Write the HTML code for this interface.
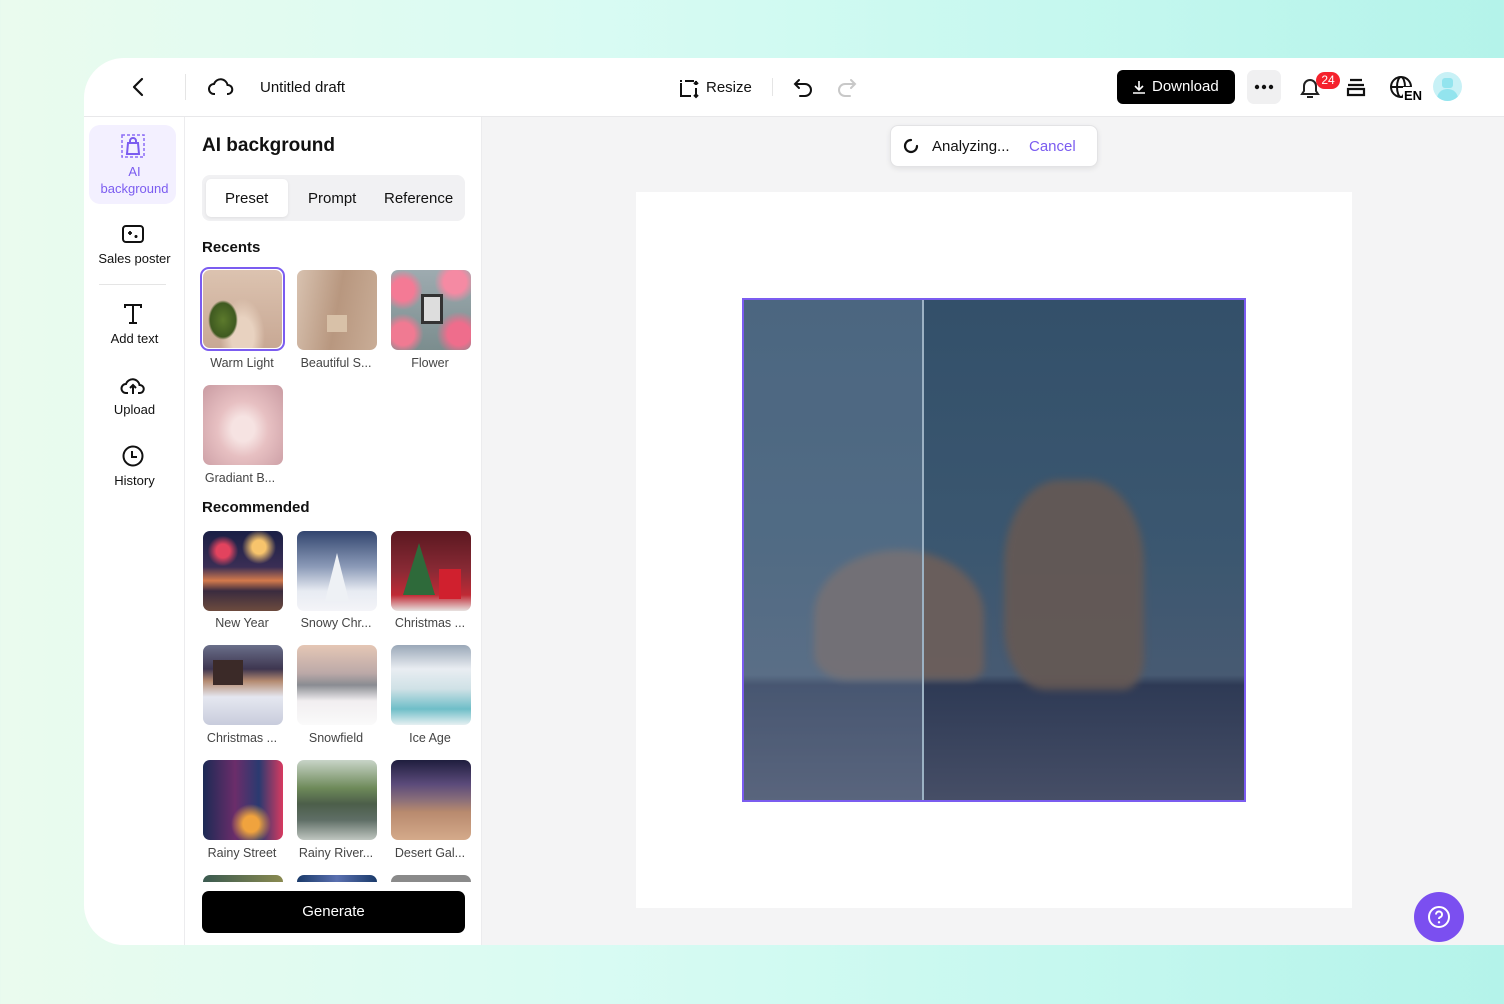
<!DOCTYPE html>
<html><head><meta charset="utf-8"><style>
*{box-sizing:border-box;margin:0;padding:0}
body{width:1504px;height:1004px;overflow:hidden;font-family:"Liberation Sans",sans-serif;color:#111;background:linear-gradient(90deg,#eafbee 0%,#d8fbf3 40%,#c6f8ef 70%,#b4f3ea 100%);position:relative}
.win{position:absolute;left:84px;top:58px;width:1460px;height:887px;background:#f4f4f5;border-radius:40px 0 0 40px;overflow:hidden}
.top{position:absolute;left:0;top:0;width:100%;height:59px;background:#fff;border-bottom:1px solid #e8e8ea}
.abs{position:absolute}
.side{position:absolute;left:0;top:59px;width:101px;height:828px;background:#fff;border-right:1px solid #ececee}
.panel{position:absolute;left:101px;top:59px;width:297px;height:828px;background:#fff;border-right:1px solid #ececee;overflow:hidden}
.si{position:absolute;left:0;width:101px;text-align:center;font-size:13px;color:#111}
.th{position:absolute;width:80px;height:80px;border-radius:7px;overflow:hidden}
.lb{position:absolute;width:94px;text-align:center;font-size:12.5px;color:#444}
</style></head><body>
<div class="win">
 <div class="top">
  <svg class="abs" style="left:46px;top:19px" width="16" height="20" viewBox="0 0 16 20"><path d="M12 2L4 10l8 8" fill="none" stroke="#111" stroke-width="2.2" stroke-linecap="round" stroke-linejoin="round"/></svg>
  <div class="abs" style="left:101px;top:16px;width:1px;height:26px;background:#e5e5e5"></div>
  <svg class="abs" style="left:124px;top:17px" width="26" height="24" viewBox="0 0 26 24"><path d="M7 19H6a5 5 0 0 1 0-10 7 7 0 0 1 13.5 1A4.5 4.5 0 0 1 20 19h-1" fill="none" stroke="#111" stroke-width="2"/></svg>
  <div class="abs" style="left:176px;top:21px;font-size:15px">Untitled draft</div>
  <svg class="abs" style="left:594px;top:19px" width="22" height="22" viewBox="0 0 22 22"><path d="M3 6v13h10M3 3v2M7 4h9M18 4v4M18 11v9M16 7l2-2 2 2M16 18l2 2 2-2" fill="none" stroke="#111" stroke-width="2"/></svg>
  <div class="abs" style="left:622px;top:21px;font-size:15px">Resize</div>
  <div class="abs" style="left:688px;top:20px;width:1px;height:18px;background:#e5e5e5"></div>
  <svg class="abs" style="left:709px;top:19px" width="22" height="22" viewBox="0 0 22 22"><path d="M6 3L2 7l4 4M2 7h10a6 6 0 0 1 0 12H7" fill="none" stroke="#111" stroke-width="2" stroke-linecap="round"/></svg>
  <svg class="abs" style="left:751px;top:19px" width="22" height="22" viewBox="0 0 22 22"><path d="M16 3l4 4-4 4M20 7H10a6 6 0 0 0 0 12h5" fill="none" stroke="#c8c8c8" stroke-width="2" stroke-linecap="round"/></svg>
  <div class="abs" style="left:1033px;top:12px;width:118px;height:34px;background:#000;border-radius:6px;color:#fff;font-size:15px;line-height:34px;padding-left:35px">Download</div>
  <svg class="abs" style="left:1047px;top:21px" width="16" height="16" viewBox="0 0 16 16"><path d="M8 2v9M4 7l4 4 4-4M2 14h12" fill="none" stroke="#fff" stroke-width="1.6"/></svg>
  <div class="abs" style="left:1163px;top:12px;width:34px;height:34px;background:#f0f0f1;border-radius:7px"></div>
  <svg class="abs" style="left:1170px;top:26px" width="20" height="6" viewBox="0 0 20 6"><circle cx="3" cy="3" r="2.2" fill="#111"/><circle cx="10" cy="3" r="2.2" fill="#111"/><circle cx="17" cy="3" r="2.2" fill="#111"/></svg>
  <svg class="abs" style="left:1213px;top:17px" width="26" height="26" viewBox="0 0 26 26"><path d="M5 19h16l-2-3v-5a6 6 0 0 0-12 0v5zM10 22h6" fill="none" stroke="#222" stroke-width="2"/></svg>
  <div class="abs" style="left:1232px;top:14px;width:24px;height:17px;background:#f5222d;border-radius:9px;color:#fff;font-size:12px;text-align:center;line-height:17px">24</div>
  <svg class="abs" style="left:1260px;top:18px" width="24" height="24" viewBox="0 0 24 24"><path d="M6 4h12M4 9h16M4 13h16v6H4z" fill="none" stroke="#111" stroke-width="2.2"/></svg>
  <svg class="abs" style="left:1305px;top:17px" width="34" height="26" viewBox="0 0 34 26"><circle cx="12" cy="12" r="10" fill="none" stroke="#111" stroke-width="2"/><ellipse cx="12" cy="12" rx="4" ry="10" fill="none" stroke="#111" stroke-width="2"/><path d="M2 12h20" stroke="#111" stroke-width="2"/><rect x="14" y="12" width="20" height="14" fill="#fff"/><text x="15" y="25" font-size="13" font-weight="bold" font-family="Liberation Sans">EN</text></svg>
  <div class="abs" style="left:1349px;top:14px;width:29px;height:29px;border-radius:50%;background:#c8f1f6;overflow:hidden"><div style="position:absolute;left:9px;top:6px;width:11px;height:10px;background:#93e4ee;border-radius:3px"></div><div style="position:absolute;left:4px;top:17px;width:21px;height:14px;background:#93e4ee;border-radius:10px 10px 0 0"></div></div>
 </div>
 <div class="side">
  <div class="abs" style="left:5px;top:8px;width:87px;height:79px;background:#f3f0ff;border-radius:11px"></div>
  <svg class="abs" style="left:37px;top:17px" width="24" height="24" viewBox="0 0 24 24"><rect x="1" y="1" width="22" height="22" fill="none" stroke="#8b6cf6" stroke-width="1.5" stroke-dasharray="3 2"/><path d="M6 20l1-11h10l1 11zM9 9V7a3 3 0 0 1 6 0v2" fill="none" stroke="#7b5cf0" stroke-width="2"/></svg>
  <div class="si" style="top:46px;color:#7b5cf0;line-height:17px">AI<br>background</div>
  <svg class="abs" style="left:37px;top:105px" width="24" height="24" viewBox="0 0 24 24"><rect x="2" y="4" width="20" height="16" rx="3" fill="none" stroke="#111" stroke-width="2"/><path d="M9 9v4M7 11h4M15 13v3M13.5 14.5h3" stroke="#111" stroke-width="1.8"/></svg>
  <div class="si" style="top:134px">Sales poster</div>
  <div class="abs" style="left:15px;top:167px;width:67px;height:1px;background:#e5e5e5"></div>
  <svg class="abs" style="left:37px;top:185px" width="24" height="24" viewBox="0 0 24 24"><path d="M4 6V3h16v3M12 3v18M8 21h8" fill="none" stroke="#111" stroke-width="2"/></svg>
  <div class="si" style="top:214px">Add text</div>
  <svg class="abs" style="left:36px;top:256px" width="26" height="24" viewBox="0 0 26 24"><path d="M8 20H6a4.5 4.5 0 0 1 0-9 7 7 0 0 1 13.5 1A4 4 0 0 1 20 20h-2M13 21v-9M10 15l3-3 3 3" fill="none" stroke="#111" stroke-width="2"/></svg>
  <div class="si" style="top:285px">Upload</div>
  <svg class="abs" style="left:37px;top:327px" width="24" height="24" viewBox="0 0 24 24"><circle cx="12" cy="12" r="9.5" fill="none" stroke="#111" stroke-width="2"/><path d="M11 7v6h5" fill="none" stroke="#111" stroke-width="2"/></svg>
  <div class="si" style="top:356px">History</div>
 </div>
 <div class="panel">
  <div class="abs" style="left:17px;top:18px;font-size:19px;font-weight:bold">AI background</div>
  <div class="abs" style="left:17px;top:58px;width:263px;height:46px;background:#f1f1f3;border-radius:8px"></div>
  <div class="abs" style="left:21px;top:62px;width:82px;height:38px;background:#fff;border-radius:5px;box-shadow:0 1px 3px rgba(0,0,0,.08)"></div>
  <div class="abs" style="left:40px;top:73px;font-size:15px">Preset</div>
  <div class="abs" style="left:123px;top:73px;font-size:15px">Prompt</div>
  <div class="abs" style="left:199px;top:73px;font-size:15px">Reference</div>
  <div class="abs" style="left:17px;top:122px;font-size:15px;font-weight:bold">Recents</div>
  <div class="abs" style="left:17px;top:382px;font-size:15px;font-weight:bold">Recommended</div>
  <div class="abs" style="left:15px;top:150px;width:85px;height:84px;border:2px solid #7b5cf0;border-radius:9px"></div>
  <div class="th" style="left:18px;top:153px;width:79px;height:78px;background:radial-gradient(ellipse at 50% 85%,#e8d2c0 20%,transparent 40%),linear-gradient(180deg,#dcc3b0,#c8a894)"><div style="position:absolute;left:5px;top:30px;width:30px;height:40px;background:radial-gradient(#5c7a2c,#3f5a20 60%,transparent 70%)"></div></div>
  <div class="th" style="left:112px;top:153px;background:linear-gradient(100deg,#d8c2b0,#b8977f 50%,#c9ad97)"><div style="position:absolute;left:30px;top:45px;width:20px;height:17px;background:#d8c1a8"></div></div>
  <div class="th" style="left:206px;top:153px;background:radial-gradient(circle at 15% 25%,#f47a95 12%,transparent 22%),radial-gradient(circle at 80% 15%,#f58aa3 12%,transparent 22%),radial-gradient(circle at 85% 80%,#ef6d8c 12%,transparent 24%),radial-gradient(circle at 15% 80%,#f07a92 12%,transparent 22%),linear-gradient(#9eabb0,#7b8d8e)"><div style="position:absolute;left:30px;top:24px;width:22px;height:30px;border:3px solid #333;background:#ddd"></div></div>
  <div class="lb" style="left:10px;top:239px">Warm Light</div>
  <div class="lb" style="left:104px;top:239px">Beautiful S...</div>
  <div class="lb" style="left:198px;top:239px">Flower</div>
  <div class="th" style="left:18px;top:268px;background:radial-gradient(ellipse at 50% 55%,#f6e3e2 20%,#e7c0c2 45%,#c99ba2)"></div>
  <div class="lb" style="left:8px;top:354px">Gradiant B...</div>

  <div class="th" style="left:18px;top:414px;background:radial-gradient(circle at 70% 20%,#f7c46c 8%,transparent 20%),radial-gradient(circle at 25% 25%,#e3435e 8%,transparent 18%),linear-gradient(#1a1f45 0%,#3a2e55 45%,#d47a4c 62%,#3a2b3f 75%,#6d4b3e)"></div>
  <div class="th" style="left:112px;top:414px;background:linear-gradient(#32456f,#8c9bb8 45%,#e7ebf2 75%,#f4f4f8)"><div style="position:absolute;left:28px;top:22px;border-left:12px solid transparent;border-right:12px solid transparent;border-bottom:48px solid #eef1f5"></div></div>
  <div class="th" style="left:206px;top:414px;background:linear-gradient(#5a1820,#8a2a35 50%,#c02a35 80%,#e7e2e0)"><div style="position:absolute;left:12px;top:12px;border-left:16px solid transparent;border-right:16px solid transparent;border-bottom:52px solid #2e6a3a"></div><div style="position:absolute;left:48px;top:38px;width:22px;height:30px;background:#d0202e"></div></div>
  <div class="lb" style="left:10px;top:499px">New Year</div>
  <div class="lb" style="left:104px;top:499px">Snowy Chr...</div>
  <div class="lb" style="left:198px;top:499px">Christmas ...</div>
  <div class="th" style="left:18px;top:528px;background:linear-gradient(#6a6f8a,#3e3650 30%,#b48a70 45%,#e5e7f0 65%,#c8ccdc)"><div style="position:absolute;left:10px;top:15px;width:30px;height:25px;background:#3b2a28"></div></div>
  <div class="th" style="left:112px;top:528px;background:linear-gradient(#e5c7b5,#bca9a8 35%,#8a8c92 50%,#f1eef0 70%,#fafafa)"></div>
  <div class="th" style="left:206px;top:528px;background:linear-gradient(#9aa8b8,#e9edf2 30%,#cfe1e6 55%,#6fbec8 80%,#e6f0f2)"></div>
  <div class="lb" style="left:10px;top:614px">Christmas ...</div>
  <div class="lb" style="left:104px;top:614px">Snowfield</div>
  <div class="lb" style="left:198px;top:614px">Ice Age</div>
  <div class="th" style="left:18px;top:643px;background:radial-gradient(circle at 60% 80%,#f0a33e 10%,transparent 25%),linear-gradient(90deg,#1c2a55,#6b2d6a 40%,#2a3a70 70%,#d83a60)"></div>
  <div class="th" style="left:112px;top:643px;background:linear-gradient(#c8d4c8,#6e8a5a 35%,#4c5e4a 55%,#5f6e66 75%,#bfc6c0)"></div>
  <div class="th" style="left:206px;top:643px;background:linear-gradient(#1f1e3e,#5b4a7a 30%,#8b6f7a 50%,#b88a6e 65%,#d4aa8a)"></div>
  <div class="lb" style="left:10px;top:729px">Rainy Street</div>
  <div class="lb" style="left:104px;top:729px">Rainy River...</div>
  <div class="lb" style="left:198px;top:729px">Desert Gal...</div>
  <div class="abs" style="left:18px;top:758px;width:80px;height:7px;border-radius:7px 7px 0 0;background:linear-gradient(90deg,#3a5a50,#8a8a50)"></div>
  <div class="abs" style="left:112px;top:758px;width:80px;height:7px;border-radius:7px 7px 0 0;background:linear-gradient(90deg,#1a3a6a,#5a70b0,#1a3a6a)"></div>
  <div class="abs" style="left:206px;top:758px;width:80px;height:7px;border-radius:7px 7px 0 0;background:#8a8a8a"></div>
  <div class="abs" style="left:17px;top:774px;width:263px;height:42px;background:#000;border-radius:7px;color:#fff;text-align:center;line-height:42px;font-size:15px">Generate</div>
 </div>
 <div class="abs" style="left:552px;top:134px;width:716px;height:716px;background:#fff"></div>
 <div class="abs" style="left:658px;top:240px;width:504px;height:504px;border:2px solid #7b5cf0;overflow:hidden;background:linear-gradient(#33506a 0%,#3b5770 50%,#475a72 75%,#2e3a55 77%,#464e66 100%)">
  <div style="position:absolute;left:70px;top:250px;width:170px;height:130px;border-radius:50% 50% 10% 20%;background:#6e5f5a;filter:blur(4px);opacity:.9"></div>
  <div style="position:absolute;left:260px;top:180px;width:140px;height:210px;border-radius:40% 40% 15% 30%;background:#665954;filter:blur(4px);opacity:.9"></div>
  <div style="position:absolute;left:0;top:0;width:178px;height:100%;background:rgba(140,160,185,.28)"></div>
  <div style="position:absolute;left:178px;top:0;width:2px;height:100%;background:#9cb2c4"></div>
 </div>
 <div class="abs" style="left:806px;top:67px;width:208px;height:42px;background:#fff;border:1px solid #e3e3e5;border-radius:8px;box-shadow:0 2px 6px rgba(0,0,0,.08)"></div>
 <svg class="abs" style="left:819px;top:80px" width="16" height="16" viewBox="0 0 16 16"><path d="M8 2a6 6 0 1 0 6 6" fill="none" stroke="#111" stroke-width="2.2" stroke-linecap="round"/></svg>
 <div class="abs" style="left:848px;top:80px;font-size:15px">Analyzing...</div>
 <div class="abs" style="left:945px;top:80px;font-size:15px;color:#7b5cf0">Cancel</div>
 <div class="abs" style="left:1330px;top:834px;width:50px;height:50px;border-radius:50%;background:#7b4ff0"></div>
 <svg class="abs" style="left:1343px;top:847px" width="24" height="24" viewBox="0 0 24 24"><circle cx="12" cy="12" r="10" fill="none" stroke="#fff" stroke-width="2"/><path d="M9 9.5a3 3 0 1 1 4 2.8c-.7.3-1 .8-1 1.7" fill="none" stroke="#fff" stroke-width="2"/><circle cx="12" cy="17.3" r="1.2" fill="#fff"/></svg>
</div>
</body></html>
